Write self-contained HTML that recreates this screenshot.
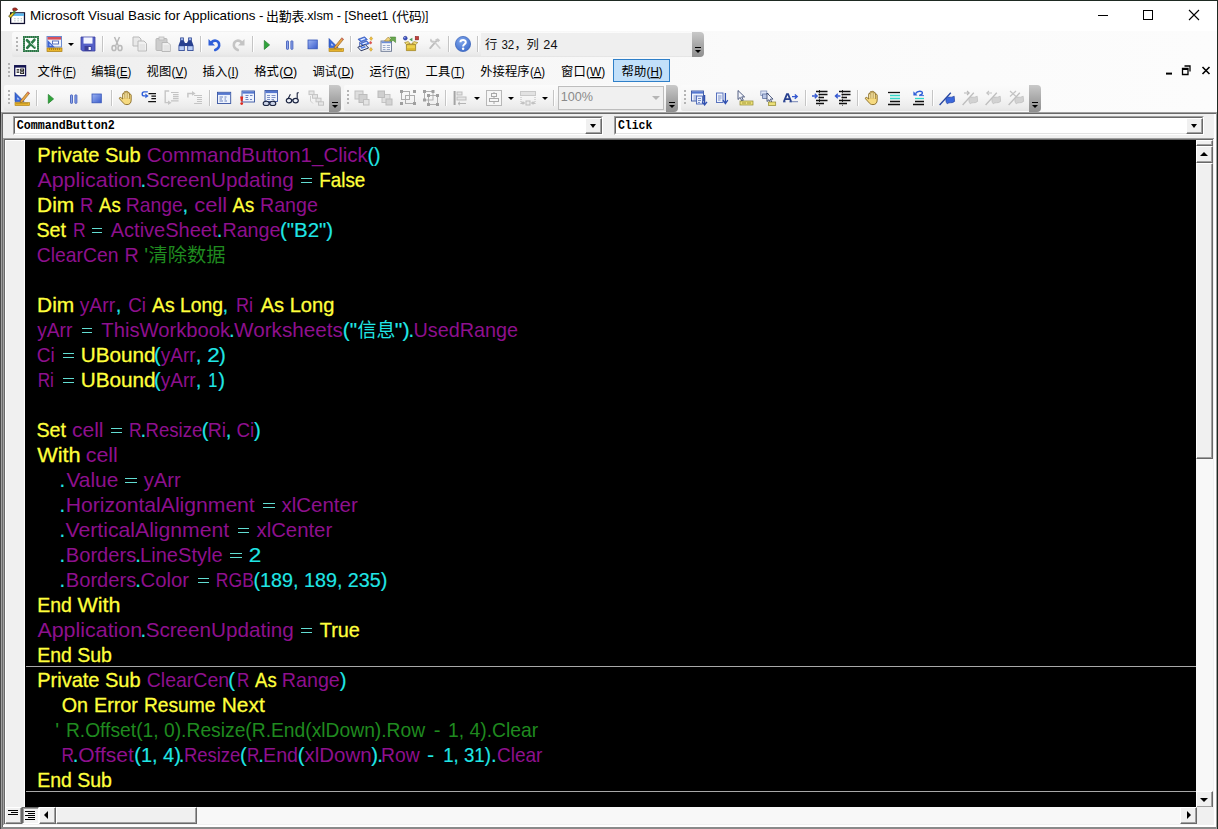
<!DOCTYPE html>
<html><head><meta charset="utf-8"><title>Microsoft Visual Basic for Applications</title>
<style>
html,body{margin:0;padding:0}
body{width:1218px;height:829px;overflow:hidden;position:relative;background:#f0f0f0;font-family:"Liberation Sans",sans-serif;font-size:12px;color:#000}
div,span,svg{position:absolute;box-sizing:border-box}
.cj{position:relative;display:inline-block;vertical-align:top;overflow:visible}
.t{white-space:pre;line-height:1}
.t span{position:static}
u{text-decoration:underline;text-underline-offset:1px}
/* toolbars */
.dock{left:1px;width:1216px;background:linear-gradient(90deg,#ededed 0,#f4f4f4 25%,#fafafa 60%,#fcfcfc 100%)}
.bar{background:linear-gradient(180deg,#fbfbfb 0,#f6f6f6 45%,#ececec 85%,#e4e4e4 100%);border-radius:2px 0 0 2px}
.cap{width:12px;background:linear-gradient(180deg,#c9c9c9 0,#a9a9a9 50%,#8f8f8f 100%);border-radius:0 4px 4px 0}
.cap i{position:absolute;left:3px;bottom:4px;width:0;height:0;border:3px solid transparent;border-top:3px solid #000;border-bottom:0}
.cap b{position:absolute;left:3px;bottom:9px;width:6px;height:1px;background:#000}
.cap s{position:absolute;left:4px;bottom:4px;width:6px;height:1px;background:#fff;opacity:.0}
.grip{width:2px;height:14px;background:repeating-linear-gradient(180deg,#b4b4b4 0,#b4b4b4 2px,transparent 2px,transparent 4px)}
.sep{width:1px;height:16px;background:#c5c5c5;box-shadow:1px 0 0 #fff}
.ic{width:16px;height:16px;overflow:visible}
.dd{width:0;height:0;border:3px solid transparent;border-top:3px solid #000;border-bottom:0}
.m{top:64px;font-size:12.6px;line-height:15px;height:15px}
.t .ml{display:inline-block;transform:scaleX(.88);transform-origin:0 0}
/* code */
#code{left:25px;top:140px;width:1171px;height:667px;background:#000;overflow:hidden}
#cs{left:0;top:0}
#cs text{white-space:pre}
.eq{height:5px;border-top:1px solid #62ddd2;border-bottom:1px solid #62ddd2}
.k{fill:#ffff3c;stroke:#ffff3c;stroke-width:.3px}.c{fill:#20e6e6;stroke:#20e6e6;stroke-width:.15px}.g{fill:#1f8a1f}.p{fill:#8e108e}
</style></head>
<body>
<svg width="0" height="0" style="position:absolute"><defs><linearGradient id="gstop" x1="0" y1="0" x2="1" y2="1"><stop offset="0" stop-color="#9db4f2"/><stop offset="1" stop-color="#3a5ccc"/></linearGradient><radialGradient id="ghelp" cx=".4" cy=".3" r=".8"><stop offset="0" stop-color="#7fa6ec"/><stop offset="1" stop-color="#3a68c8"/></radialGradient><g id="i-excel"><rect x="1" y="1" width="14" height="14" fill="#fff" stroke="#2c7345" stroke-width="2"/><path d="M1 1H15V15H1Z" fill="none" stroke="#8fc7a0" stroke-width=".7" stroke-dasharray="1 1"/><path d="M4 4.2L11.6 11.6M11.4 3.8L4.2 11.8" stroke="#2c7a48" stroke-width="2.7" stroke-linecap="round"/><path d="M7 6.2L12.4 11.2" stroke="#dff0e4" stroke-width=".8"/></g><g id="i-form"><rect x="1" y="0.5" width="14.5" height="10.5" fill="#eef2fb" stroke="#6a8ad0"/><rect x="1.5" y="1" width="13.5" height="2.6" fill="#d8505a"/><path d="M1.5 4V11.5H9Z" fill="#3a63d2"/><path d="M3.5 7.5V9.8H5.8Z" fill="#cfe0ff"/><rect x="6.5" y="5" width="6" height="3" fill="#fff" stroke="#4a66b8" stroke-width=".9"/><rect x="1" y="12" width="15" height="3.6" fill="#e9b52c" stroke="#a87b12" stroke-width=".7"/><path d="M3.5 12.3v1.6M5.5 12.3v1.6M7.5 12.3v1.6M9.5 12.3v1.6M11.5 12.3v1.6M13.5 12.3v1.6" stroke="#7a5a0c" stroke-width=".6"/></g><g id="i-save"><path d="M1 1H15V15H2.5L1 13.5Z" fill="#5560c8"/><path d="M1 1H15V15H2.5L1 13.5Z" fill="none" stroke="#3a3f9e" stroke-width=".8"/><rect x="3.5" y="1.4" width="9" height="6.2" fill="#f3f5ff"/><rect x="4.5" y="10" width="7" height="5" fill="#3b3f98"/><rect x="8.6" y="11" width="2.2" height="3" fill="#f3f5ff"/></g><g id="i-cut"><path d="M5.5 1L9.2 9.5M10.5 1L6.8 9.5" stroke="#b9b9b9" stroke-width="1.5" fill="none"/><ellipse cx="5" cy="12" rx="2" ry="2.6" fill="none" stroke="#b9b9b9" stroke-width="1.5"/><ellipse cx="11" cy="12" rx="2" ry="2.6" fill="none" stroke="#b9b9b9" stroke-width="1.5"/></g><g id="i-copy"><path d="M1 1H7L9 3V10H1Z" fill="#e9e9e9" stroke="#b9b9b9"/><path d="M6 5H12L14.5 7.5V15H6Z" fill="#f1f1f1" stroke="#b9b9b9"/><path d="M7.5 9H13M7.5 11H13M7.5 13H13" stroke="#d6d6d6" stroke-width=".8"/></g><g id="i-paste"><rect x="1" y="2.5" width="11" height="12" rx="1" fill="#cdcdcd" stroke="#b9b9b9"/><rect x="4" y="1" width="5" height="3" fill="#e3e3e3" stroke="#b9b9b9" stroke-width=".8"/><path d="M7 6.5H13L15.3 8.8V15.5H7Z" fill="#efefef" stroke="#b9b9b9"/><path d="M8.5 10H14M8.5 12H14M8.5 14H14" stroke="#d6d6d6" stroke-width=".8"/></g><g id="i-find"><path d="M2.2 1.5H5.8V4.5L7 7H9L10.2 4.5V1.5H13.8V5L15.5 9.5V15H9.3V10H6.7V15H.5V9.5L2.2 5Z" fill="#27408f"/><rect x="1.3" y="10.2" width="4.6" height="4" fill="#b9cdf5"/><rect x="10.1" y="10.2" width="4.6" height="4" fill="#b9cdf5"/><rect x="3" y="2.2" width="2" height="2" fill="#9fb6ec"/><rect x="11" y="2.2" width="2" height="2" fill="#9fb6ec"/></g><g id="i-undo"><path d="M4.5 6.2C7 3.8 11 4.2 12 7.5C12.8 10.5 11 13 8.2 14" fill="none" stroke="#2f5fd8" stroke-width="2.6" stroke-linecap="round"/><path d="M1.5 3V9.5H8Z" fill="#2f5fd8"/></g><g id="i-redo"><path d="M11.5 6.2C9 3.8 5 4.2 4 7.5C3.2 10.5 5 13 7.8 14" fill="none" stroke="#c4c4c4" stroke-width="2.6" stroke-linecap="round"/><path d="M14.5 3V9.5H8Z" fill="#c4c4c4"/></g><g id="i-run"><path d="M5.3 3.4L10.6 7.9L5.3 12.4Z" fill="#2fa33a" stroke="#1e7d28" stroke-width=".7" stroke-linejoin="round"/></g><g id="i-pause"><rect x="4.5" y="3.9" width="2" height="8.4" rx=".5" fill="#8ea6ec" stroke="#3552b4" stroke-width=".8"/><rect x="8.9" y="3.9" width="2" height="8.4" rx=".5" fill="#8ea6ec" stroke="#3552b4" stroke-width=".8"/></g><g id="i-stop"><rect x="3" y="4" width="9.3" height="8.8" fill="url(#gstop)" stroke="#3454b8" stroke-width=".8"/></g><g id="i-design"><path d="M1 2.5V11.5H10Z" fill="#3a68d8" stroke="#2548a8" stroke-width=".6"/><path d="M3.3 7.2V9.4H5.6Z" fill="#dfe9ff"/><path d="M6.5 10.8L13.8 1.8L15.6 3.3L8.3 12.2L6 12.9Z" fill="#e8a545" stroke="#8a5a1a" stroke-width=".6"/><path d="M13.8 1.8L15.6 3.3L14.8 4.3L13 2.8Z" fill="#d06a6a"/><rect x="1" y="12.6" width="14.6" height="3" fill="#ecb82e" stroke="#a87b12" stroke-width=".6"/><path d="M3 12.8v1.4M5 12.8v1.4M7 12.8v1.4M9 12.8v1.4M11 12.8v1.4M13 12.8v1.4" stroke="#7a5a0c" stroke-width=".6"/></g><g id="i-proj"><path d="M1 3.2L7.6 .8L10.4 3.6L3.8 6Z" fill="#4d7ae4" stroke="#2444a8" stroke-width=".6"/><path d="M3.2 3.6L7.4 2.1L8.4 3.1L4.2 4.6Z" fill="#eef3ff"/><path d="M3 7.2L9.6 4.8L12.4 7.6L5.8 10Z" fill="#4d7ae4" stroke="#2444a8" stroke-width=".6"/><path d="M5.2 7.6L9.4 6.1L10.4 7.1L6.2 8.6Z" fill="#eef3ff"/><path d="M.8 11.2L8.4 8.6L11.6 12L4 14.8Z" fill="#e6edfb" stroke="#16224e" stroke-width=".9"/><path d="M3.4 11.6L7.8 10.1L9 11.3L4.6 12.8Z" fill="#4d7ae4"/><path d="M2.6 6V10.4M4.6 10V11" stroke="#2444a8" stroke-width=".7"/><path d="M12.6 2.6l1.5-1.9 1.5 1.9-1.5 1.9z" fill="#f0c040" stroke="#b88a18" stroke-width=".5"/><path d="M12 6.2l1.7-1.1 1.5 1.6-1.5 1.7z" fill="#d9534f"/><path d="M12.4 13.4l1.5-1.9 1.5 1.9-1.5 1.9z" fill="#f0c040" stroke="#b88a18" stroke-width=".5"/></g><g id="i-props"><rect x="1" y="5" width="10.5" height="10.3" fill="#f4f6fb" stroke="#66738f" stroke-width=".9"/><rect x="1.5" y="5.4" width="9.5" height="1.8" fill="#6e8fd8"/><path d="M2.8 9.5H5.5M6.8 9.5H10M2.8 11.5H5.5M6.8 11.5H10M2.8 13.5H5.5M6.8 13.5H10" stroke="#8fa0c4" stroke-width=".9"/><path d="M4.5 5L8 1.2L11.2 3.6V5Z" fill="#f1d27a" stroke="#9a7a28" stroke-width=".6"/><path d="M9.8 1H15.6V6.5L12.8 4.2L11.4 5.8L9.6 4L11.4 2.6Z" fill="#6aa84f" stroke="#3d7a2a" stroke-width=".5"/></g><g id="i-objb"><path d="M3.4 8.6H12.6V14.6H3.4Z" fill="#ecd04a" stroke="#8a6e14" stroke-width=".7"/><path d="M3.4 8.6L1.6 6.6L5.2 5.6L7 7.4ZM12.6 8.6L14.8 6.6L11 5.6L9 7.4Z" fill="#f6e27a" stroke="#8a6e14" stroke-width=".6" stroke-linejoin="round"/><path d="M7 7.4H9L12.6 8.6H3.4Z" fill="#b8962a"/><path d="M3.8 12.2H12.2V14.2H3.8Z" fill="#d9b62e"/><circle cx="2.3" cy="2.2" r="1.9" fill="#3a4fc0" stroke="#1c2a80" stroke-width=".5"/><circle cx="1.8" cy="1.7" r=".6" fill="#c9d4ff"/><path d="M6.3 3.6L9.4 1.8V5.4Z" fill="#4a9a5a"/><rect x="12.2" y=".4" width="3.5" height="3.5" fill="#c2403c" stroke="#7e1e1c" stroke-width=".5"/></g><g id="i-tools"><g transform="translate(1.6 1) scale(.8)"><path d="M2 13.8L9.5 5.2" stroke="#bdbdbd" stroke-width="2.4" stroke-linecap="round"/><path d="M8 3.5L11.5 1.5L14.5 4L12 6.5Z" fill="#c6c6c6"/><path d="M14 13.8L6.5 5.4" stroke="#cdcdcd" stroke-width="2" stroke-linecap="round"/><path d="M3 1.8A3 3 0 1 0 7.6 5.2L5.6 5.4L4.2 3.8Z" fill="#c9c9c9"/></g></g><g id="i-help"><circle cx="8" cy="8" r="7.6" fill="url(#ghelp)" stroke="#3560b8" stroke-width=".7"/><path d="M5.4 6.2C5.4 3.2 10.8 3.2 10.8 6.2C10.8 8.2 8.1 8.2 8.1 10.4" fill="none" stroke="#fff" stroke-width="2"/><circle cx="8.1" cy="12.8" r="1.25" fill="#fff"/></g><g id="i-hand"><path d="M4.6 9V4.2C4.6 3 6.2 3 6.2 4.2V2.4C6.2 1.1 8 1.1 8 2.4V2.2C8 .9 9.8 .9 9.8 2.3V3.2C9.8 2.1 11.5 2.1 11.5 3.4V5C11.5 4 13.2 4 13.2 5.2V10C13.2 13 11.6 14.6 9 14.6C6.8 14.6 5.8 13.8 4.6 12.2L1.6 8.9C.8 7.9 2.1 6.8 3.1 7.7Z" fill="#f6da80" stroke="#7a5a14" stroke-width=".8" stroke-linejoin="round"/><path d="M6.2 4V8.4M8 2.4V8.4M9.8 3.2V8.4M11.5 5V8.8" stroke="#8a6a1c" stroke-width=".75"/><path d="M5.4 4.4V8M7.1 2.8V8M8.9 2.6V8M10.7 3.8V8" stroke="#fff6cf" stroke-width=".7"/></g><g id="i-stepin"><path d="M6.8 1.9H3C.6 1.9 .6 5.9 3 5.9H4.6" fill="none" stroke="#2f5fd8" stroke-width="1.4"/><path d="M4.3 3.5L7.7 5.9L4.3 8.3Z" fill="#2f5fd8"/><path d="M7.5 3.5H15M10.4 6H15M10.4 8.5H15M7.2 11.5H15" stroke="#111" stroke-width="1.25"/></g><g id="i-stepover"><path d="M5.2 1H1.2V12.6H4.5" fill="none" stroke="#c6c6c6" stroke-width="1.4"/><path d="M4 10.4L7.6 12.7L4 15Z" fill="#c6c6c6"/><path d="M7 2.5H14.6M9 4.6H14.6M9 6.7H14.6M9 8.7H14.6M7 10.8H14.6" stroke="#c4c4c4" stroke-width="1.2"/></g><g id="i-stepout"><path d="M.9 7.6V3.4H5.5" fill="none" stroke="#c6c6c6" stroke-width="1.5"/><path d="M5 1L8.6 3.4L5 5.8Z" fill="#c6c6c6"/><path d="M7.1 5.5H15M10 7.5H15M10 9.5H15M10 11.5H15M7.1 13.5H15" stroke="#c4c4c4" stroke-width="1.2"/></g><g id="i-locals"><rect x="1.5" y="2.3" width="13.2" height="11.2" fill="#eef3fd" stroke="#35529f" stroke-width=".9"/><rect x="1.9" y="2.7" width="12.4" height="2.2" fill="#5577cf"/><path d="M3.5 7H7M8.5 7H10.5M3.5 9H6M8.5 9H10M3.5 11H7M8.5 11H11" stroke="#5f78b8" stroke-width=".9"/></g><g id="i-immed"><rect x="3" y="1" width="12.5" height="11" fill="#eef3fd" stroke="#35529f" stroke-width=".9"/><rect x="3.4" y="1.4" width="11.7" height="2.2" fill="#5577cf"/><path d="M6.5 5.5H9.5M11 5.5H13.5M6.5 7.5H9M6.5 9.5H9.5M11 9.5H13" stroke="#5f78b8" stroke-width=".9"/><path d="M1.2 6.5H4.2L3.6 11.5H1.8Z" fill="#e0281e"/><circle cx="2.7" cy="13.6" r="1.4" fill="#e0281e"/></g><g id="i-watch"><rect x="3" y="0.5" width="12.5" height="11" fill="#eef3fd" stroke="#35529f" stroke-width=".9"/><rect x="3.4" y="0.9" width="11.7" height="2.2" fill="#5577cf"/><path d="M5 5.5H8M9.5 5.5H13.5M5 7.5H8M9.5 7.5H13.5M5 9.5H8M9.5 9.5H12" stroke="#6f86bf" stroke-width=".9"/><path d="M4 10.5L2.5 13M12 10.5L13.2 12.6" stroke="#1b2440" stroke-width="1"/><ellipse cx="4.2" cy="13.4" rx="3" ry="2.1" fill="#cbd3e6" stroke="#1b2440" stroke-width="1.1"/><ellipse cx="10.8" cy="13.4" rx="3" ry="2.1" fill="#cbd3e6" stroke="#1b2440" stroke-width="1.1"/><path d="M7 13H8" stroke="#1b2440"/></g><g id="i-qwatch"><path d="M3.2 8.5L5.4 4.2M12.2 8.5V3.2L13.6 2.6" fill="none" stroke="#1b2440" stroke-width="1.1"/><ellipse cx="4" cy="10.6" rx="2.7" ry="2.3" fill="#eef1f8" stroke="#1b2440" stroke-width="1.2"/><ellipse cx="10.6" cy="10.6" rx="2.7" ry="2.3" fill="#eef1f8" stroke="#1b2440" stroke-width="1.2"/><path d="M6.6 10H8" stroke="#1b2440" stroke-width="1.1"/></g><g id="i-calls"><rect x="1" y="1" width="5" height="3.6" fill="#e6e6e6" stroke="#c4c4c4"/><rect x="4.5" y="4.6" width="5" height="3.6" fill="#e6e6e6" stroke="#c4c4c4"/><rect x="8" y="8.2" width="5" height="3.6" fill="#e6e6e6" stroke="#c4c4c4"/><rect x="10.5" y="11.8" width="5" height="3.4" fill="#e6e6e6" stroke="#c4c4c4"/><path d="M2.5 6V11L5 13.5" fill="none" stroke="#cfcfcf"/></g><g id="i-front"><rect x="1" y="1" width="8" height="8" fill="#dedede" stroke="#c0c0c0"/><rect x="5" y="4.5" width="8" height="8" fill="#d0d0d0" stroke="#bcbcbc"/><rect x="9.5" y="9.5" width="5.5" height="5.5" fill="#e4e4e4" stroke="#c0c0c0"/></g><g id="i-back"><rect x="5" y="4.5" width="8" height="8" fill="#e0e0e0" stroke="#c4c4c4"/><rect x="1" y="1" width="6.5" height="6.5" fill="#cfcfcf" stroke="#bcbcbc"/><rect x="9" y="9" width="6" height="6" fill="#d4d4d4" stroke="#bcbcbc"/></g><g id="i-group"><rect x="1.5" y="1.5" width="8" height="8" fill="none" stroke="#adadad"/><rect x="5.5" y="5.5" width="9" height="8" fill="none" stroke="#adadad"/><path d="M0 0h3v3h-3zM13 0h3v3h-3zM0 12h3v3h-3zM13 12h3v3h-3z" fill="#9f9f9f"/></g><g id="i-ungroup"><rect x="1.5" y="1.5" width="8.5" height="8.5" fill="none" stroke="#ababab" stroke-width=".9"/><rect x="5.5" y="5.5" width="9" height="9" fill="none" stroke="#ababab" stroke-width=".9"/><path d="M0 0h3v3h-3zM8.5 0h3v3h-3zM0 8.5h3v3h-3zM4 4h3v3h-3zM13 4h3v3h-3zM4 13h3v3h-3zM13 13h3v3h-3z" fill="#9f9f9f"/></g><g id="i-align"><path d="M1.6 1V15" stroke="#a4a4a4" stroke-width="2"/><rect x="4" y="2" width="5" height="3" fill="#e6e6e6" stroke="#bdbdbd"/><rect x="4" y="7" width="9" height="3" fill="#e6e6e6" stroke="#bdbdbd"/><path d="M13 13.5H5M7 11.8L5 13.5L7 15.2" fill="none" stroke="#b4b4b4"/></g><g id="i-center"><rect x=".5" y=".5" width="15" height="15" fill="#f6f6f6" stroke="#b8b8b8"/><path d="M8 2V14" stroke="#a8a8a8"/><rect x="5.5" y="3.5" width="5" height="3" fill="#f6f6f6" stroke="#a8a8a8"/><rect x="3.5" y="8.5" width="9" height="3" fill="#f6f6f6" stroke="#a8a8a8"/></g><g id="i-samesize"><rect x=".5" y="1.5" width="15" height="4" fill="#e2e2e2" stroke="#c9c9c9"/><path d="M1 7V14M15 7V14" stroke="#b8b8b8" stroke-dasharray="1 1"/><rect x="6" y="11" width="4" height="4" fill="#ececec" stroke="#bdbdbd"/><path d="M1 13H5M3 11.5V14.5M11 13H15M13 11.5V14.5" stroke="#b4b4b4"/></g><g id="i-listp"><rect x="0.5" y="1" width="12" height="10" fill="#eef3fd" stroke="#35529f" stroke-width=".9"/><rect x="0.9" y="1.4" width="11.2" height="2.2" fill="#5577cf"/><path d="M2.5 6H6M2.5 8H6M2.5 10H5" stroke="#6f86bf" stroke-width=".9"/><rect x="5.5" y="6" width="6" height="8" fill="#e8eefc" stroke="#4a66b8" stroke-width=".9"/><path d="M7 8.5H10M7 10.5H10M7 12.5H9" stroke="#6f86bf" stroke-width=".9"/><path d="M13.6 5V14.5M11.2 11.8L13.6 15L16 11.8" fill="none" stroke="#3050b0" stroke-width="1.3"/></g><g id="i-listc"><rect x="2.5" y="3" width="6.5" height="9.5" fill="#eef3fd" stroke="#4a66b8" stroke-width=".9"/><path d="M4 6H7.5M4 8H7.5M4 10H6.5" stroke="#6f86bf" stroke-width=".9"/><path d="M11.4 3V13M9 10.2L11.4 13.6L13.8 10.2" fill="none" stroke="#3050b0" stroke-width="1.3"/></g><g id="i-qinfo"><path d="M1 .5V9.5L3.2 7.4L4.8 11L6.3 10.3L4.7 6.9H7.6Z" fill="#f4f6fc" stroke="#2b3a66" stroke-width=".8" stroke-linejoin="round"/><rect x="3" y="11" width="13" height="4" fill="#ece07a" stroke="#8f8730" stroke-width=".7"/><path d="M5 13H9M10 13H14" stroke="#8f8730" stroke-width=".8"/></g><g id="i-pinfo"><rect x=".8" y="1" width="6" height="4.5" fill="#dfe7f8" stroke="#7f90b8" stroke-width=".8"/><rect x="2.6" y="4" width="6" height="4.5" fill="#b9c6e6" stroke="#5f719f" stroke-width=".8"/><path d="M7 3V11.5L9 9.7L10.4 12.8L11.8 12.2L10.4 9.1H13Z" fill="#f4f6fc" stroke="#2b3a66" stroke-width=".8" stroke-linejoin="round"/><rect x="8.5" y="12" width="7.2" height="3.6" fill="#ece07a" stroke="#8f8730" stroke-width=".7"/></g><g id="i-cword"><path d="M.9 11.6L3.9 4.2H5.1L8.1 11.6M2.2 9.2H6.8" fill="none" stroke="#27408f" stroke-width="1.8"/><path d="M0 11.8H2.6M6.4 11.8H9" stroke="#27408f" stroke-width="1"/><path d="M9 6.6H14M11.8 4.4L14.2 6.6L11.8 8.8" fill="none" stroke="#3458d0" stroke-width="1.4"/><path d="M9.5 11.6H14.5" stroke="#27408f" stroke-dasharray="1 1" stroke-width="1.1"/></g><g id="i-indent"><path d="M4 1.5H15.5M6.5 4.5H15.5M6.5 7.5H12M4 10.5H15.5M4 13.5H12" stroke="#111" stroke-width="1.5"/><path d="M7.5 0V16" stroke="#111" stroke-dasharray="1 1.2" stroke-width=".9"/><path d="M0 6H4.8M2.8 3.8L5.2 6L2.8 8.2" fill="none" stroke="#3458d0" stroke-width="1.3"/></g><g id="i-outdent"><path d="M4 1.5H15.5M6.5 4.5H15.5M6.5 7.5H12M4 10.5H15.5M4 13.5H12" stroke="#111" stroke-width="1.5"/><path d="M7.5 0V16" stroke="#111" stroke-dasharray="1 1.2" stroke-width=".9"/><path d="M5.4 6H.6M2.8 3.8L.4 6L2.8 8.2" fill="none" stroke="#3458d0" stroke-width="1.3"/></g><g id="i-comment"><path d="M1 2.5H13" stroke="#111" stroke-width="1.3"/><path d="M3 5.5H13M3 8.5H13" stroke="#35d6c8" stroke-width="1.3"/><path d="M3 11.5H13M1 14.5H13" stroke="#111" stroke-width="1.3"/></g><g id="i-uncomment"><path d="M9.5 5C13 5 13.5 1.2 9.8 1.2C7.5 1.2 6.2 2.4 5.5 3.6" fill="none" stroke="#2f5fd8" stroke-width="1.4"/><path d="M3.4 1.2V5.4H7.6Z" fill="#2f5fd8"/><path d="M9 5.6H14" stroke="#2f5fd8" stroke-width=".9"/><path d="M5 8.5H14" stroke="#35d6c8" stroke-width="1.3"/><path d="M5 11.5H14M3 14.5H14" stroke="#111" stroke-width="1.3"/></g><g id="i-bm"><path d="M.6 15L11.8 2.8" stroke="#27459f" stroke-width="1.3"/><path d="M7.2 7.8C9.5 6 11.5 8.4 15.2 6.2L15.6 11.4C12.5 14 10.5 11.6 8.2 13.8C6.8 12.4 6.6 9.8 7.2 7.8Z" fill="#3a67dc" stroke="#27459f" stroke-width=".7"/></g><g id="i-bmnext"><path d="M.6 15L11.8 2.8" stroke="#bebebe" stroke-width="1.3"/><path d="M7.2 7.8C9.5 6 11.5 8.4 15.2 6.2L15.6 11.4C12.5 14 10.5 11.6 8.2 13.8C6.8 12.4 6.6 9.8 7.2 7.8Z" fill="#d2d2d2" stroke="#bcbcbc" stroke-width=".7"/><path d="M2 3H7M5 1L7.2 3L5 5" fill="none" stroke="#b8b8b8" stroke-width="1.1"/></g><g id="i-bmprev"><path d="M.6 15L11.8 2.8" stroke="#bebebe" stroke-width="1.3"/><path d="M7.2 7.8C9.5 6 11.5 8.4 15.2 6.2L15.6 11.4C12.5 14 10.5 11.6 8.2 13.8C6.8 12.4 6.6 9.8 7.2 7.8Z" fill="#d2d2d2" stroke="#bcbcbc" stroke-width=".7"/><path d="M7 3H2M4 1L1.8 3L4 5" fill="none" stroke="#c4c4c4" stroke-width="1.1"/></g><g id="i-bmclear"><path d="M.6 15L11.8 2.8" stroke="#bebebe" stroke-width="1.3"/><path d="M7.2 7.8C9.5 6 11.5 8.4 15.2 6.2L15.6 11.4C12.5 14 10.5 11.6 8.2 13.8C6.8 12.4 6.6 9.8 7.2 7.8Z" fill="#d2d2d2" stroke="#bcbcbc" stroke-width=".7"/><path d="M2 1L8 6.5M8 1L2 6.5" fill="none" stroke="#c4c4c4" stroke-width="1.2"/></g><g id="i-vbaicon"><rect x="2.5" y="5.5" width="13" height="10" fill="#fff" stroke="#101030" stroke-width="1.2"/><rect x="3" y="6" width="12" height="2.4" fill="#5cb8f0"/><path d="M6 11h1M9 11h1M12 11h1M6 13h1M9 13h1M12 13h1" stroke="#9aa" stroke-width=".9"/><path d="M4.5 1.5C6 .3 8.5 .8 9 2.4C8 3.6 6 3.8 4.6 3.2Z" fill="#a8281e" stroke="#5e120c" stroke-width=".6"/><path d="M.6 8.4L5.2 4.4L6.6 5.8L2.4 10.4Z" fill="#e6c82a" stroke="#3a3408" stroke-width=".7"/><path d="M4.2 5.2L6.2 3.4L7.4 4.6L5.4 6.6Z" fill="#4f8a3a"/></g><g id="i-menuicon"><rect x=".8" y=".8" width="12.4" height="11.4" fill="#fff" stroke="#141450" stroke-width="1.5"/><rect x="1" y="1" width="12" height="2" fill="#141450"/><path d="M3 5.5H6M3 8.2H6" stroke="#111" stroke-width="1.3"/><rect x="7.6" y="4.6" width="3.4" height="2" fill="none" stroke="#111" stroke-width="1"/><rect x="7.6" y="7.8" width="3.4" height="2" fill="none" stroke="#111" stroke-width="1"/></g></defs></svg>
<!-- window frame -->
<div style="left:0;top:0;width:1218px;height:829px;background:#f0f0f0"></div>
<div id="title" style="left:0;top:0;width:1218px;height:31px;background:#fff"></div>
<svg class="ic" style="left:8px;top:7px;width:17px;height:17px" viewBox="0 0 16 16"><use href="#i-vbaicon"/></svg>
<svg style="left:1090px;top:5px;width:120px;height:22px" viewBox="0 0 120 22" fill="none" stroke="#000" stroke-width="1">
<path d="M8 10.5H18"/><rect x="53.5" y="5.5" width="9" height="9"/><path d="M99 5L109 15M109 5L99 15" stroke-width="1.1"/></svg>
<!-- toolbar row 1 -->
<div class="dock" style="top:31px;height:27px"></div>
<div class="bar" style="left:12px;top:32px;width:681px;height:25px"></div>
<div style="left:481px;top:33px;width:211px;height:23px;background:#efefef"></div>
<div class="cap" style="left:692px;top:32px;height:25px"><b></b><i></i></div>
<div class="grip" style="left:16px;top:37px"></div>
<svg class="ic" style="left:23px;top:36px;width:16px;height:16px" viewBox="0 0 16 16"><use href="#i-excel"/></svg><svg class="ic" style="left:46px;top:36px;width:16px;height:16px" viewBox="0 0 16 16"><use href="#i-form"/></svg><div class="dd" style="left:68px;top:43px"></div><svg class="ic" style="left:80px;top:36px;width:16px;height:16px" viewBox="0 0 16 16"><use href="#i-save"/></svg>
<div class="sep" style="left:102px;top:36px"></div>
<svg class="ic" style="left:109px;top:36px;width:16px;height:16px" viewBox="0 0 16 16"><use href="#i-cut"/></svg><svg class="ic" style="left:132px;top:36px;width:16px;height:16px" viewBox="0 0 16 16"><use href="#i-copy"/></svg><svg class="ic" style="left:155px;top:36px;width:16px;height:16px" viewBox="0 0 16 16"><use href="#i-paste"/></svg><svg class="ic" style="left:178px;top:36px;width:16px;height:16px" viewBox="0 0 16 16"><use href="#i-find"/></svg>
<div class="sep" style="left:200px;top:36px"></div>
<svg class="ic" style="left:207px;top:36px;width:16px;height:16px" viewBox="0 0 16 16"><use href="#i-undo"/></svg><svg class="ic" style="left:230px;top:36px;width:16px;height:16px" viewBox="0 0 16 16"><use href="#i-redo"/></svg>
<div class="sep" style="left:252px;top:36px"></div>
<svg class="ic" style="left:259px;top:36.5px;width:16px;height:16px" viewBox="0 0 16 16"><use href="#i-run"/></svg><svg class="ic" style="left:282px;top:36.5px;width:16px;height:16px" viewBox="0 0 16 16"><use href="#i-pause"/></svg><svg class="ic" style="left:305px;top:36.3px;width:16px;height:16px" viewBox="0 0 16 16"><use href="#i-stop"/></svg><svg class="ic" style="left:328px;top:36px;width:16px;height:16px" viewBox="0 0 16 16"><use href="#i-design"/></svg>
<div class="sep" style="left:350px;top:36px"></div>
<svg class="ic" style="left:357px;top:36px;width:16px;height:16px" viewBox="0 0 16 16"><use href="#i-proj"/></svg><svg class="ic" style="left:380px;top:36px;width:16px;height:16px" viewBox="0 0 16 16"><use href="#i-props"/></svg><svg class="ic" style="left:403px;top:36px;width:16px;height:16px" viewBox="0 0 16 16"><use href="#i-objb"/></svg><svg class="ic" style="left:427px;top:36px;width:16px;height:16px" viewBox="0 0 16 16"><use href="#i-tools"/></svg>
<div class="sep" style="left:448px;top:36px"></div>
<svg class="ic" style="left:455px;top:36px;width:16px;height:16px" viewBox="0 0 16 16"><use href="#i-help"/></svg>
<div class="sep" style="left:477px;top:36px"></div>
<!-- menu bar -->
<div class="dock" style="top:58px;height:26px"></div>
<div class="grip" style="left:8px;top:63px;height:15px"></div>
<svg class="ic" style="left:14px;top:64.6px;width:14px;height:14px" viewBox="0 0 16 16"><use href="#i-menuicon"/></svg>
<div style="left:613px;top:59px;width:57px;height:23px;background:#c2e0fa;border:1px solid #2f7fc8"></div>
<!-- MDI child controls -->
<svg style="left:1160px;top:62px;width:56px;height:18px" viewBox="0 0 56 18" fill="none" stroke="#000">
<path d="M6 11.6H12" stroke-width="2"/><path d="M24.5 4H30V9.5M22.5 6.5H28V12.5H22.5Z M22.5 7.3H28" stroke-width="1.3"/><path d="M42.5 5L49.5 12M49.5 5L42.5 12" stroke-width="1.6"/></svg>
<!-- toolbar row 2 -->
<div class="dock" style="top:84px;height:28px"></div>
<div class="bar" style="left:4px;top:85px;width:326px;height:26px"></div>
<div class="cap" style="left:329px;top:85px;height:27px"><b></b><i></i></div>
<div class="grip" style="left:8px;top:90px"></div>
<svg class="ic" style="left:14px;top:89.5px;width:16px;height:16px" viewBox="0 0 16 16"><use href="#i-design"/></svg>
<div class="sep" style="left:36px;top:90px"></div>
<svg class="ic" style="left:43px;top:90.5px;width:16px;height:16px" viewBox="0 0 16 16"><use href="#i-run"/></svg><svg class="ic" style="left:66px;top:90.5px;width:16px;height:16px" viewBox="0 0 16 16"><use href="#i-pause"/></svg><svg class="ic" style="left:89px;top:90.3px;width:16px;height:16px" viewBox="0 0 16 16"><use href="#i-stop"/></svg>
<div class="sep" style="left:111px;top:90px"></div>
<svg class="ic" style="left:118px;top:90px;width:16px;height:16px" viewBox="0 0 16 16"><use href="#i-hand"/></svg><svg class="ic" style="left:141px;top:90px;width:16px;height:16px" viewBox="0 0 16 16"><use href="#i-stepin"/></svg><svg class="ic" style="left:164px;top:90px;width:16px;height:16px" viewBox="0 0 16 16"><use href="#i-stepover"/></svg><svg class="ic" style="left:187px;top:90px;width:16px;height:16px" viewBox="0 0 16 16"><use href="#i-stepout"/></svg>
<div class="sep" style="left:209px;top:90px"></div>
<svg class="ic" style="left:216px;top:90px;width:16px;height:16px" viewBox="0 0 16 16"><use href="#i-locals"/></svg><svg class="ic" style="left:239px;top:90px;width:16px;height:16px" viewBox="0 0 16 16"><use href="#i-immed"/></svg><svg class="ic" style="left:262px;top:90px;width:16px;height:16px" viewBox="0 0 16 16"><use href="#i-watch"/></svg><svg class="ic" style="left:285px;top:90px;width:16px;height:16px" viewBox="0 0 16 16"><use href="#i-qwatch"/></svg><svg class="ic" style="left:308px;top:90px;width:16px;height:16px" viewBox="0 0 16 16"><use href="#i-calls"/></svg>
<!-- userform toolbar -->
<div class="bar" style="left:344px;top:85px;width:324px;height:26px"></div>
<div class="cap" style="left:666px;top:85px;height:27px"><b></b><i></i></div>
<div class="grip" style="left:347px;top:90px"></div>
<svg class="ic" style="left:354px;top:90px;width:16px;height:16px" viewBox="0 0 16 16"><use href="#i-front"/></svg><svg class="ic" style="left:377px;top:90px;width:16px;height:16px" viewBox="0 0 16 16"><use href="#i-back"/></svg><svg class="ic" style="left:400px;top:90px;width:16px;height:16px" viewBox="0 0 16 16"><use href="#i-group"/></svg><svg class="ic" style="left:423px;top:90px;width:16px;height:16px" viewBox="0 0 16 16"><use href="#i-ungroup"/></svg>
<div class="sep" style="left:445px;top:90px"></div>
<svg class="ic" style="left:453px;top:90px;width:16px;height:16px" viewBox="0 0 16 16"><use href="#i-align"/></svg><div class="dd" style="left:474px;top:97px"></div>
<svg class="ic" style="left:486px;top:90px;width:16px;height:16px" viewBox="0 0 16 16"><use href="#i-center"/></svg><div class="dd" style="left:508px;top:97px"></div>
<svg class="ic" style="left:520px;top:90px;width:16px;height:16px" viewBox="0 0 16 16"><use href="#i-samesize"/></svg><div class="dd" style="left:542px;top:97px"></div>
<div class="sep" style="left:553px;top:90px"></div>
<div style="left:558px;top:86px;width:106px;height:24px;background:#f0f0f0;border:1px solid #bdbdbd"></div>
<div class="dd" style="left:652px;top:96px;border-width:4px 4px 0 4px;border-top-color:#b5b5b5"></div>
<!-- edit toolbar -->
<div class="bar" style="left:681px;top:85px;width:349px;height:26px"></div>
<div class="cap" style="left:1029px;top:85px;height:27px"><b></b><i></i></div>
<div class="grip" style="left:684px;top:90px"></div>
<svg class="ic" style="left:691px;top:90px;width:16px;height:16px" viewBox="0 0 16 16"><use href="#i-listp"/></svg><svg class="ic" style="left:714px;top:90px;width:16px;height:16px" viewBox="0 0 16 16"><use href="#i-listc"/></svg><svg class="ic" style="left:737px;top:90px;width:16px;height:16px" viewBox="0 0 16 16"><use href="#i-qinfo"/></svg><svg class="ic" style="left:760px;top:90px;width:16px;height:16px" viewBox="0 0 16 16"><use href="#i-pinfo"/></svg><svg class="ic" style="left:783px;top:90px;width:16px;height:16px" viewBox="0 0 16 16"><use href="#i-cword"/></svg>
<div class="sep" style="left:805px;top:90px"></div>
<svg class="ic" style="left:812px;top:90px;width:16px;height:16px" viewBox="0 0 16 16"><use href="#i-indent"/></svg><svg class="ic" style="left:835px;top:90px;width:16px;height:16px" viewBox="0 0 16 16"><use href="#i-outdent"/></svg>
<div class="sep" style="left:857px;top:90px"></div>
<svg class="ic" style="left:864px;top:90px;width:16px;height:16px" viewBox="0 0 16 16"><use href="#i-hand"/></svg><svg class="ic" style="left:887px;top:90px;width:16px;height:16px" viewBox="0 0 16 16"><use href="#i-comment"/></svg><svg class="ic" style="left:910px;top:90px;width:16px;height:16px" viewBox="0 0 16 16"><use href="#i-uncomment"/></svg>
<div class="sep" style="left:932px;top:90px"></div>
<svg class="ic" style="left:939px;top:90px;width:16px;height:16px" viewBox="0 0 16 16"><use href="#i-bm"/></svg><svg class="ic" style="left:962px;top:90px;width:16px;height:16px" viewBox="0 0 16 16"><use href="#i-bmnext"/></svg><svg class="ic" style="left:985px;top:90px;width:16px;height:16px" viewBox="0 0 16 16"><use href="#i-bmprev"/></svg><svg class="ic" style="left:1008px;top:90px;width:16px;height:16px" viewBox="0 0 16 16"><use href="#i-bmclear"/></svg>
<!-- MDI client sunken border + code window -->
<div style="left:1px;top:112px;width:1216px;height:1px;background:#a0a0a0"></div>
<div style="left:1px;top:113px;width:1215px;height:1px;background:#696969"></div>
<div style="left:1px;top:112px;width:1px;height:716px;background:#a0a0a0"></div>
<div style="left:2px;top:113px;width:1px;height:714px;background:#696969"></div>
<div style="left:3px;top:114px;width:1211px;height:711px;background:#f0f0f0"></div>
<!-- left combo -->
<div style="left:13px;top:116px;width:590px;height:19px;background:#fff;border:1px solid #a0a0a0;border-right-color:#fff;border-bottom-color:#fff"></div>
<div style="left:14px;top:117px;width:588px;height:17px;border:1px solid #696969;border-right-color:#e3e3e3;border-bottom-color:#e3e3e3"></div>
<div style="left:585px;top:118px;width:17px;height:16px;background:#f0f0f0;border:1px solid #fff;border-right-color:#696969;border-bottom-color:#696969;box-shadow:inset -1px -1px 0 #a0a0a0"></div>
<div class="dd" style="left:589.5px;top:124px;border-width:4px 3.5px 0 3.5px;border-top-color:#000"></div>
<!-- right combo -->
<div style="left:614px;top:116px;width:590px;height:19px;background:#fff;border:1px solid #a0a0a0;border-right-color:#fff;border-bottom-color:#fff"></div>
<div style="left:615px;top:117px;width:588px;height:17px;border:1px solid #696969;border-right-color:#e3e3e3;border-bottom-color:#e3e3e3"></div>
<div style="left:1186px;top:118px;width:17px;height:16px;background:#f0f0f0;border:1px solid #fff;border-right-color:#696969;border-bottom-color:#696969;box-shadow:inset -1px -1px 0 #a0a0a0"></div>
<div class="dd" style="left:1190.5px;top:124px;border-width:4px 3.5px 0 3.5px;border-top-color:#000"></div>
<!-- code pane sunken border -->
<div style="left:3px;top:138px;width:1211px;height:1px;background:#a0a0a0"></div>
<div style="left:4px;top:139px;width:1209px;height:1px;background:#696969"></div>
<div style="left:3px;top:138px;width:1px;height:687px;background:#a0a0a0"></div>
<div style="left:4px;top:139px;width:1px;height:685px;background:#696969"></div>
<!-- margin indicator bar -->
<div style="left:5px;top:140px;width:20px;height:667px;background:#f0f0f0;border:1px solid #fff;border-bottom:0"></div>
<div id="code">
<div class="eq" style="left:275.8px;top:38.0px;width:11.6px"></div>
<div class="eq" style="left:67.0px;top:88.0px;width:10.3px"></div>
<div class="eq" style="left:56.5px;top:188.0px;width:10.9px"></div>
<div class="eq" style="left:37.8px;top:213.0px;width:10.9px"></div>
<div class="eq" style="left:37.8px;top:238.0px;width:10.9px"></div>
<div class="eq" style="left:85.5px;top:288.0px;width:11.5px"></div>
<div class="eq" style="left:100.2px;top:338.0px;width:11.5px"></div>
<div class="eq" style="left:238.4px;top:363.0px;width:11.6px"></div>
<div class="eq" style="left:212.5px;top:388.0px;width:11.5px"></div>
<div class="eq" style="left:205.3px;top:413.0px;width:11.9px"></div>
<div class="eq" style="left:172.9px;top:438.0px;width:11.5px"></div>
<div class="eq" style="left:275.8px;top:488.0px;width:11.6px"></div>
<svg id="cs" width="1171" height="667" font-family="Liberation Sans, sans-serif" font-size="20.3"><text class="k" x="12.22" y="22.0" textLength="103.40" lengthAdjust="spacingAndGlyphs">Private Sub</text><text class="p" x="121.76" y="22.0" textLength="221.06" lengthAdjust="spacingAndGlyphs">CommandButton1_Click</text><text class="c" x="342.60" y="22.0" textLength="12.96" lengthAdjust="spacingAndGlyphs">()</text><text class="p" x="12.43" y="47.0" textLength="104.73" lengthAdjust="spacingAndGlyphs">Application</text><text class="c" x="118.32" y="47.0" text-anchor="middle">.</text><text class="p" x="120.65" y="47.0" textLength="148.14" lengthAdjust="spacingAndGlyphs">ScreenUpdating</text><text class="k" x="294.31" y="47.0" textLength="46.02" lengthAdjust="spacingAndGlyphs">False</text><text class="k" x="12.05" y="72.0" textLength="37.18" lengthAdjust="spacingAndGlyphs">Dim</text><text class="p" x="55.03" y="72.0" textLength="13.39" lengthAdjust="spacingAndGlyphs">R</text><text class="k" x="74.07" y="72.0" textLength="21.55" lengthAdjust="spacingAndGlyphs">As</text><text class="p" x="100.77" y="72.0" textLength="57.08" lengthAdjust="spacingAndGlyphs">Range</text><text class="c" x="160.27" y="72.0" text-anchor="middle">,</text><text class="p" x="169.27" y="72.0" textLength="32.91" lengthAdjust="spacingAndGlyphs">cell</text><text class="k" x="207.57" y="72.0" textLength="21.55" lengthAdjust="spacingAndGlyphs">As</text><text class="p" x="234.95" y="72.0" textLength="57.91" lengthAdjust="spacingAndGlyphs">Range</text><text class="k" x="11.52" y="97.0" textLength="29.48" lengthAdjust="spacingAndGlyphs">Set</text><text class="p" x="47.92" y="97.0" textLength="12.65" lengthAdjust="spacingAndGlyphs">R</text><text class="p" x="85.75" y="97.0" textLength="106.79" lengthAdjust="spacingAndGlyphs">ActiveSheet</text><text class="c" x="194.62" y="97.0" text-anchor="middle">.</text><text class="p" x="197.44" y="97.0" textLength="58.02" lengthAdjust="spacingAndGlyphs">Range</text><text class="c" x="254.94" y="97.0" textLength="53.15" lengthAdjust="spacingAndGlyphs">("B2")</text><text class="p" x="11.72" y="122.0" textLength="81.69" lengthAdjust="spacingAndGlyphs">ClearCen</text><text class="p" x="99.44" y="122.0" textLength="14.25" lengthAdjust="spacingAndGlyphs">R</text><text class="g" x="121.19" y="122.0" text-anchor="middle">'</text><text x="123.50" y="122.4" textLength="77.00" lengthAdjust="spacingAndGlyphs" font-family="Liberation Sans, Noto Sans CJK SC, sans-serif" font-size="19.5" fill="#1f8a1f">清除数据</text><text class="k" x="12.05" y="172.0" textLength="37.18" lengthAdjust="spacingAndGlyphs">Dim</text><text class="p" x="54.66" y="172.0" textLength="35.52" lengthAdjust="spacingAndGlyphs">yArr</text><text class="c" x="93.67" y="172.0" text-anchor="middle">,</text><text class="p" x="103.15" y="172.0" textLength="17.81" lengthAdjust="spacingAndGlyphs">Ci</text><text class="k" x="127.06" y="172.0" textLength="70.94" lengthAdjust="spacingAndGlyphs">As Long</text><text class="c" x="200.27" y="172.0" text-anchor="middle">,</text><text class="p" x="211.07" y="172.0" textLength="17.04" lengthAdjust="spacingAndGlyphs">Ri</text><text class="k" x="235.65" y="172.0" textLength="73.68" lengthAdjust="spacingAndGlyphs">As Long</text><text class="p" x="12.26" y="197.0" textLength="35.11" lengthAdjust="spacingAndGlyphs">yArr</text><text class="p" x="76.36" y="197.0" textLength="128.75" lengthAdjust="spacingAndGlyphs">ThisWorkbook</text><text class="c" x="206.82" y="197.0" text-anchor="middle">.</text><text class="p" x="209.14" y="197.0" textLength="108.71" lengthAdjust="spacingAndGlyphs">Worksheets</text><text class="c" x="317.72" y="197.0" textLength="14.29" lengthAdjust="spacingAndGlyphs">("</text><text x="332.50" y="197.4" textLength="37.90" lengthAdjust="spacingAndGlyphs" font-family="Liberation Sans, Noto Sans CJK SC, sans-serif" font-size="19.5" fill="#20e6e6">信息</text><text class="c" x="369.89" y="197.0" textLength="14.81" lengthAdjust="spacingAndGlyphs">")</text><text class="c" x="386.32" y="197.0" text-anchor="middle">.</text><text class="p" x="388.50" y="197.0" textLength="104.51" lengthAdjust="spacingAndGlyphs">UsedRange</text><text class="p" x="11.74" y="222.0" textLength="18.04" lengthAdjust="spacingAndGlyphs">Ci</text><text class="k" x="55.73" y="222.0" textLength="74.87" lengthAdjust="spacingAndGlyphs">UBound</text><text class="c" x="132.33" y="222.0" text-anchor="middle">(</text><text class="p" x="135.76" y="222.0" textLength="34.91" lengthAdjust="spacingAndGlyphs">yArr</text><text class="c" x="173.67" y="222.0" text-anchor="middle">,</text><text class="c" x="182.27" y="222.0" textLength="12.49" lengthAdjust="spacingAndGlyphs">2</text><text class="c" x="197.44" y="222.0" text-anchor="middle">)</text><text class="p" x="12.64" y="247.0" textLength="16.22" lengthAdjust="spacingAndGlyphs">Ri</text><text class="k" x="55.73" y="247.0" textLength="74.87" lengthAdjust="spacingAndGlyphs">UBound</text><text class="c" x="132.33" y="247.0" text-anchor="middle">(</text><text class="p" x="135.76" y="247.0" textLength="34.91" lengthAdjust="spacingAndGlyphs">yArr</text><text class="c" x="173.67" y="247.0" text-anchor="middle">,</text><text class="c" x="183.19" y="247.0" textLength="9.08" lengthAdjust="spacingAndGlyphs">1</text><text class="c" x="196.54" y="247.0" text-anchor="middle">)</text><text class="k" x="11.52" y="297.0" textLength="29.48" lengthAdjust="spacingAndGlyphs">Set</text><text class="p" x="46.91" y="297.0" textLength="31.62" lengthAdjust="spacingAndGlyphs">cell</text><text class="p" x="104.12" y="297.0" textLength="12.65" lengthAdjust="spacingAndGlyphs">R</text><text class="c" x="118.32" y="297.0" text-anchor="middle">.</text><text class="p" x="120.53" y="297.0" textLength="56.72" lengthAdjust="spacingAndGlyphs">Resize</text><text class="c" x="180.13" y="297.0" text-anchor="middle">(</text><text class="p" x="182.87" y="297.0" textLength="18.33" lengthAdjust="spacingAndGlyphs">Ri</text><text class="c" x="203.47" y="297.0" text-anchor="middle">,</text><text class="p" x="211.46" y="297.0" textLength="17.70" lengthAdjust="spacingAndGlyphs">Ci</text><text class="c" x="232.34" y="297.0" text-anchor="middle">)</text><text class="k" x="12.23" y="322.0" textLength="43.32" lengthAdjust="spacingAndGlyphs">With</text><text class="p" x="60.69" y="322.0" textLength="32.16" lengthAdjust="spacingAndGlyphs">cell</text><text class="c" x="37.22" y="347.0" text-anchor="middle">.</text><text class="p" x="41.50" y="347.0" textLength="51.82" lengthAdjust="spacingAndGlyphs">Value</text><text class="p" x="118.65" y="347.0" textLength="37.04" lengthAdjust="spacingAndGlyphs">yArr</text><text class="c" x="37.22" y="372.0" text-anchor="middle">.</text><text class="p" x="40.73" y="372.0" textLength="189.03" lengthAdjust="spacingAndGlyphs">HorizontalAlignment</text><text class="p" x="256.47" y="372.0" textLength="76.31" lengthAdjust="spacingAndGlyphs">xlCenter</text><text class="c" x="37.22" y="397.0" text-anchor="middle">.</text><text class="p" x="40.60" y="397.0" textLength="163.58" lengthAdjust="spacingAndGlyphs">VerticalAlignment</text><text class="p" x="231.48" y="397.0" textLength="75.71" lengthAdjust="spacingAndGlyphs">xlCenter</text><text class="c" x="37.22" y="422.0" text-anchor="middle">.</text><text class="p" x="40.81" y="422.0" textLength="70.38" lengthAdjust="spacingAndGlyphs">Borders</text><text class="c" x="113.02" y="422.0" text-anchor="middle">.</text><text class="p" x="115.11" y="422.0" textLength="82.50" lengthAdjust="spacingAndGlyphs">LineStyle</text><text class="c" x="223.77" y="422.0" textLength="12.49" lengthAdjust="spacingAndGlyphs">2</text><text class="c" x="37.22" y="447.0" text-anchor="middle">.</text><text class="p" x="40.81" y="447.0" textLength="70.38" lengthAdjust="spacingAndGlyphs">Borders</text><text class="c" x="113.02" y="447.0" text-anchor="middle">.</text><text class="p" x="115.57" y="447.0" textLength="48.55" lengthAdjust="spacingAndGlyphs">Color</text><text class="p" x="190.81" y="447.0" textLength="38.09" lengthAdjust="spacingAndGlyphs">RGB</text><text class="c" x="228.38" y="447.0" textLength="134.04" lengthAdjust="spacingAndGlyphs">(189, 189, 235)</text><text class="k" x="12.26" y="472.0" textLength="34.60" lengthAdjust="spacingAndGlyphs">End</text><text class="k" x="52.53" y="472.0" textLength="42.91" lengthAdjust="spacingAndGlyphs">With</text><text class="p" x="12.43" y="497.0" textLength="104.73" lengthAdjust="spacingAndGlyphs">Application</text><text class="c" x="118.32" y="497.0" text-anchor="middle">.</text><text class="p" x="120.65" y="497.0" textLength="148.14" lengthAdjust="spacingAndGlyphs">ScreenUpdating</text><text class="k" x="294.77" y="497.0" textLength="40.08" lengthAdjust="spacingAndGlyphs">True</text><text class="k" x="12.26" y="522.0" textLength="34.60" lengthAdjust="spacingAndGlyphs">End</text><text class="k" x="52.13" y="522.0" textLength="34.69" lengthAdjust="spacingAndGlyphs">Sub</text><text class="k" x="12.22" y="547.0" textLength="103.40" lengthAdjust="spacingAndGlyphs">Private Sub</text><text class="p" x="121.81" y="547.0" textLength="82.31" lengthAdjust="spacingAndGlyphs">ClearCen</text><text class="c" x="206.63" y="547.0" text-anchor="middle">(</text><text class="p" x="212.06" y="547.0" textLength="12.29" lengthAdjust="spacingAndGlyphs">R</text><text class="k" x="230.07" y="547.0" textLength="21.55" lengthAdjust="spacingAndGlyphs">As</text><text class="p" x="256.85" y="547.0" textLength="57.91" lengthAdjust="spacingAndGlyphs">Range</text><text class="c" x="318.24" y="547.0" text-anchor="middle">)</text><text class="k" x="36.74" y="572.0" textLength="26.29" lengthAdjust="spacingAndGlyphs">On</text><text class="k" x="68.94" y="572.0" textLength="43.97" lengthAdjust="spacingAndGlyphs">Error</text><text class="k" x="118.88" y="572.0" textLength="71.60" lengthAdjust="spacingAndGlyphs">Resume</text><text class="k" x="196.75" y="572.0" textLength="43.03" lengthAdjust="spacingAndGlyphs">Next</text><text class="g" x="32.19" y="597.0" text-anchor="middle">'</text><text class="g" x="40.88" y="597.0" textLength="359.27" lengthAdjust="spacingAndGlyphs">R.Offset(1, 0).Resize(R.End(xlDown).Row</text><text class="g" x="412.01" y="597.0" text-anchor="middle">-</text><text class="g" x="423.07" y="597.0" textLength="90.24" lengthAdjust="spacingAndGlyphs">1, 4).Clear</text><text class="p" x="36.43" y="622.0" textLength="12.53" lengthAdjust="spacingAndGlyphs">R</text><text class="c" x="50.62" y="622.0" text-anchor="middle">.</text><text class="p" x="53.17" y="622.0" textLength="55.64" lengthAdjust="spacingAndGlyphs">Offset</text><text class="c" x="109.27" y="622.0" textLength="46.60" lengthAdjust="spacingAndGlyphs">(1, 4)</text><text class="c" x="156.62" y="622.0" text-anchor="middle">.</text><text class="p" x="158.94" y="622.0" textLength="56.40" lengthAdjust="spacingAndGlyphs">Resize</text><text class="c" x="218.43" y="622.0" text-anchor="middle">(</text><text class="p" x="222.06" y="622.0" textLength="12.29" lengthAdjust="spacingAndGlyphs">R</text><text class="c" x="236.02" y="622.0" text-anchor="middle">.</text><text class="p" x="238.04" y="622.0" textLength="35.03" lengthAdjust="spacingAndGlyphs">End</text><text class="c" x="276.18" y="622.0" text-anchor="middle">(</text><text class="p" x="279.57" y="622.0" textLength="66.94" lengthAdjust="spacingAndGlyphs">xlDown</text><text class="c" x="349.74" y="622.0" text-anchor="middle">)</text><text class="c" x="355.02" y="622.0" text-anchor="middle">.</text><text class="p" x="356.07" y="622.0" textLength="38.62" lengthAdjust="spacingAndGlyphs">Row</text><text class="c" x="405.61" y="622.0" text-anchor="middle">-</text><text class="c" x="418.22" y="622.0" textLength="47.62" lengthAdjust="spacingAndGlyphs">1, 31)</text><text class="c" x="468.72" y="622.0" text-anchor="middle">.</text><text class="p" x="471.94" y="622.0" textLength="45.47" lengthAdjust="spacingAndGlyphs">Clear</text><text class="k" x="12.26" y="647.0" textLength="34.60" lengthAdjust="spacingAndGlyphs">End</text><text class="k" x="52.13" y="647.0" textLength="34.69" lengthAdjust="spacingAndGlyphs">Sub</text></svg>
<div style="left:1px;top:526px;width:1170px;height:1px;background:#a8a8a8"></div>
<div style="left:1px;top:651px;width:1170px;height:1px;background:#a8a8a8"></div>
</div><!-- vertical scrollbar -->
<div style="left:1196px;top:140px;width:17px;height:667px;background:#f8f8f8"></div>
<div style="left:1196px;top:140px;width:17px;height:6px;background:#f0f0f0;border:1px solid #fff;border-right-color:#696969;border-bottom-color:#696969;box-shadow:inset -1px -1px 0 #a0a0a0"></div>
<div style="left:1196px;top:146px;width:17px;height:17px;background:#f0f0f0;border:1px solid #fff;border-right-color:#696969;border-bottom-color:#696969;box-shadow:inset -1px -1px 0 #a0a0a0"></div>
<div style="left:1200px;top:152px;width:0;height:0;border:4px solid transparent;border-bottom:4px solid #000;border-top:0"></div>
<div style="left:1196px;top:163px;width:17px;height:296px;background:#f0f0f0;border:1px solid #fff;border-right-color:#696969;border-bottom-color:#696969;box-shadow:inset -1px -1px 0 #a0a0a0"></div>
<div style="left:1196px;top:791px;width:17px;height:17px;background:#f0f0f0;border:1px solid #fff;border-right-color:#696969;border-bottom-color:#696969;box-shadow:inset -1px -1px 0 #a0a0a0"></div>
<div style="left:1200px;top:798px;width:0;height:0;border:4px solid transparent;border-top:4px solid #000;border-bottom:0"></div>
<!-- horizontal scrollbar -->
<div style="left:5px;top:807px;width:1191px;height:17px;background:#f8f8f8"></div>
<div style="left:5px;top:807px;width:17px;height:17px;background:#f0f0f0;border:1px solid #fff;border-right-color:#696969;border-bottom-color:#696969;box-shadow:inset -1px -1px 0 #a0a0a0"></div>
<div style="left:8px;top:810px;width:10px;height:1px;background:#000;box-shadow:0 4px 0 #000"></div><div style="left:11px;top:812px;width:7px;height:1px;background:#000"></div>
<div style="left:22px;top:807px;width:17px;height:17px;background:#f4f4f4;border:1px solid #696969;border-right-color:#fff;border-bottom-color:#fff;box-shadow:inset 1px 1px 0 #a0a0a0"></div>
<div style="left:25px;top:811px;width:10px;height:1px;background:#000;box-shadow:0 4px 0 #000,0 8px 0 #000"></div><div style="left:28px;top:813px;width:7px;height:1px;background:#000;box-shadow:0 4px 0 #000"></div>
<div style="left:39px;top:807px;width:17px;height:17px;background:#f0f0f0;border:1px solid #fff;border-right-color:#696969;border-bottom-color:#696969;box-shadow:inset -1px -1px 0 #a0a0a0"></div>
<div style="left:44px;top:811px;width:0;height:0;border:4px solid transparent;border-right:4px solid #000;border-left:0"></div>
<div style="left:56px;top:807px;width:141px;height:17px;background:#f0f0f0;border:1px solid #fff;border-right-color:#696969;border-bottom-color:#696969;box-shadow:inset -1px -1px 0 #a0a0a0"></div>
<div style="left:1180px;top:807px;width:17px;height:17px;background:#f0f0f0;border:1px solid #fff;border-right-color:#696969;border-bottom-color:#696969;box-shadow:inset -1px -1px 0 #a0a0a0"></div>
<div style="left:1187px;top:811px;width:0;height:0;border:4px solid transparent;border-left:4px solid #000;border-right:0"></div>
<div style="left:1197px;top:807px;width:16px;height:17px;background:#f0f0f0"></div>
<!-- bottom/right edges -->
<div style="left:3px;top:825px;width:1212px;height:2px;background:#fff"></div>
<div style="left:1214px;top:114px;width:2px;height:713px;background:#fff"></div>
<div style="left:1px;top:827px;width:1216px;height:2px;background:#8a8a8a"></div>
<div style="left:1216px;top:112px;width:1px;height:717px;background:#a0a0a0"></div>
<svg id="tx" width="1218" height="829" style="left:0;top:0"><text x="30.04" y="20" textLength="233.52" lengthAdjust="spacingAndGlyphs" font-family="Liberation Sans, sans-serif" font-weight="normal" font-size="13" fill="#000">Microsoft Visual Basic for Applications -</text><text x="303.71" y="20" textLength="92.41" lengthAdjust="spacingAndGlyphs" font-family="Liberation Sans, sans-serif" font-weight="normal" font-size="13" fill="#000">.xlsm - [Sheet1 (</text><text x="421.60" y="20" textLength="6.68" lengthAdjust="spacingAndGlyphs" font-family="Liberation Sans, sans-serif" font-weight="normal" font-size="13" fill="#000">)]</text><text x="501.40" y="49" textLength="12.85" lengthAdjust="spacingAndGlyphs" font-family="Liberation Sans, sans-serif" font-weight="normal" font-size="12.6" fill="#111">32</text><text x="543.39" y="49" textLength="14.07" lengthAdjust="spacingAndGlyphs" font-family="Liberation Sans, sans-serif" font-weight="normal" font-size="12.6" fill="#111">24</text><text x="560.71" y="101" textLength="32.27" lengthAdjust="spacingAndGlyphs" font-family="Liberation Sans, sans-serif" font-weight="normal" font-size="12.4" fill="#8a8a8a">100%</text><text x="16.87" y="129" textLength="97.88" lengthAdjust="spacingAndGlyphs" font-family="Liberation Mono, monospace" font-weight="bold" font-size="13.7" fill="#000">CommandButton2</text><text x="617.88" y="129" textLength="34.45" lengthAdjust="spacingAndGlyphs" font-family="Liberation Mono, monospace" font-weight="bold" font-size="13.7" fill="#000">Click</text><text x="62.58" y="76" textLength="13.52" lengthAdjust="spacingAndGlyphs" font-family="Liberation Sans, sans-serif" font-weight="normal" font-size="12.6" fill="#000">(<tspan text-decoration="underline">F</tspan>)</text><text x="116.24" y="76" textLength="15.14" lengthAdjust="spacingAndGlyphs" font-family="Liberation Sans, sans-serif" font-weight="normal" font-size="12.6" fill="#000">(<tspan text-decoration="underline">E</tspan>)</text><text x="171.61" y="76" textLength="15.69" lengthAdjust="spacingAndGlyphs" font-family="Liberation Sans, sans-serif" font-weight="normal" font-size="12.6" fill="#000">(<tspan text-decoration="underline">V</tspan>)</text><text x="227.62" y="76" textLength="10.90" lengthAdjust="spacingAndGlyphs" font-family="Liberation Sans, sans-serif" font-weight="normal" font-size="12.6" fill="#000">(<tspan text-decoration="underline">I</tspan>)</text><text x="279.17" y="76" textLength="18.01" lengthAdjust="spacingAndGlyphs" font-family="Liberation Sans, sans-serif" font-weight="normal" font-size="12.6" fill="#000">(<tspan text-decoration="underline">O</tspan>)</text><text x="337.39" y="76" textLength="16.75" lengthAdjust="spacingAndGlyphs" font-family="Liberation Sans, sans-serif" font-weight="normal" font-size="12.6" fill="#000">(<tspan text-decoration="underline">D</tspan>)</text><text x="394.65" y="76" textLength="15.33" lengthAdjust="spacingAndGlyphs" font-family="Liberation Sans, sans-serif" font-weight="normal" font-size="12.6" fill="#000">(<tspan text-decoration="underline">R</tspan>)</text><text x="450.67" y="76" textLength="13.84" lengthAdjust="spacingAndGlyphs" font-family="Liberation Sans, sans-serif" font-weight="normal" font-size="12.6" fill="#000">(<tspan text-decoration="underline">T</tspan>)</text><text x="529.93" y="76" textLength="15.25" lengthAdjust="spacingAndGlyphs" font-family="Liberation Sans, sans-serif" font-weight="normal" font-size="12.6" fill="#000">(<tspan text-decoration="underline">A</tspan>)</text><text x="586.10" y="76" textLength="19.24" lengthAdjust="spacingAndGlyphs" font-family="Liberation Sans, sans-serif" font-weight="normal" font-size="12.6" fill="#000">(<tspan text-decoration="underline">W</tspan>)</text><text x="646.62" y="76" textLength="16.10" lengthAdjust="spacingAndGlyphs" font-family="Liberation Sans, sans-serif" font-weight="normal" font-size="12.6" fill="#000">(<tspan text-decoration="underline">H</tspan>)</text><text x="266.00" y="20.6" textLength="38.40" lengthAdjust="spacingAndGlyphs" font-family="Liberation Sans, Noto Sans CJK SC, sans-serif" font-size="12.8" fill="#000">出勤表</text><text x="396.30" y="20.6" textLength="25.60" lengthAdjust="spacingAndGlyphs" font-family="Liberation Sans, Noto Sans CJK SC, sans-serif" font-size="12.8" fill="#000">代码</text><text x="485.00" y="49" font-family="Liberation Sans, Noto Sans CJK SC, sans-serif" font-size="12.3" fill="#111">行</text><text x="514.50" y="49" font-family="Liberation Sans, Noto Sans CJK SC, sans-serif" font-size="12.3" fill="#111">，</text><text x="526.50" y="49" font-family="Liberation Sans, Noto Sans CJK SC, sans-serif" font-size="12.3" fill="#111">列</text><text x="37.50" y="75.8" textLength="24.60" lengthAdjust="spacingAndGlyphs" font-family="Liberation Sans, Noto Sans CJK SC, sans-serif" font-size="12.3" fill="#000">文件</text><text x="91.20" y="75.8" textLength="24.60" lengthAdjust="spacingAndGlyphs" font-family="Liberation Sans, Noto Sans CJK SC, sans-serif" font-size="12.3" fill="#000">编辑</text><text x="146.60" y="75.8" textLength="24.60" lengthAdjust="spacingAndGlyphs" font-family="Liberation Sans, Noto Sans CJK SC, sans-serif" font-size="12.3" fill="#000">视图</text><text x="202.60" y="75.8" textLength="24.60" lengthAdjust="spacingAndGlyphs" font-family="Liberation Sans, Noto Sans CJK SC, sans-serif" font-size="12.3" fill="#000">插入</text><text x="254.20" y="75.8" textLength="24.60" lengthAdjust="spacingAndGlyphs" font-family="Liberation Sans, Noto Sans CJK SC, sans-serif" font-size="12.3" fill="#000">格式</text><text x="312.40" y="75.8" textLength="24.60" lengthAdjust="spacingAndGlyphs" font-family="Liberation Sans, Noto Sans CJK SC, sans-serif" font-size="12.3" fill="#000">调试</text><text x="369.60" y="75.8" textLength="24.60" lengthAdjust="spacingAndGlyphs" font-family="Liberation Sans, Noto Sans CJK SC, sans-serif" font-size="12.3" fill="#000">运行</text><text x="425.60" y="75.8" textLength="24.60" lengthAdjust="spacingAndGlyphs" font-family="Liberation Sans, Noto Sans CJK SC, sans-serif" font-size="12.3" fill="#000">工具</text><text x="480.30" y="75.8" textLength="49.20" lengthAdjust="spacingAndGlyphs" font-family="Liberation Sans, Noto Sans CJK SC, sans-serif" font-size="12.3" fill="#000">外接程序</text><text x="561.10" y="75.8" textLength="24.60" lengthAdjust="spacingAndGlyphs" font-family="Liberation Sans, Noto Sans CJK SC, sans-serif" font-size="12.3" fill="#000">窗口</text><text x="621.60" y="75.8" textLength="24.60" lengthAdjust="spacingAndGlyphs" font-family="Liberation Sans, Noto Sans CJK SC, sans-serif" font-size="12.3" fill="#000">帮助</text></svg>
<!-- outer dark border -->
<div style="left:0;top:0;width:1218px;height:1px;background:#1e2a22"></div>
<div style="left:0;top:0;width:1px;height:829px;background:linear-gradient(180deg,#2a2a2a 0,#2a2a2a 110px,#4a4a4a 140px,#4a4a4a 100%)"></div>
<div style="left:1217px;top:0;width:1px;height:829px;background:#1e2a22"></div>
</body></html>
